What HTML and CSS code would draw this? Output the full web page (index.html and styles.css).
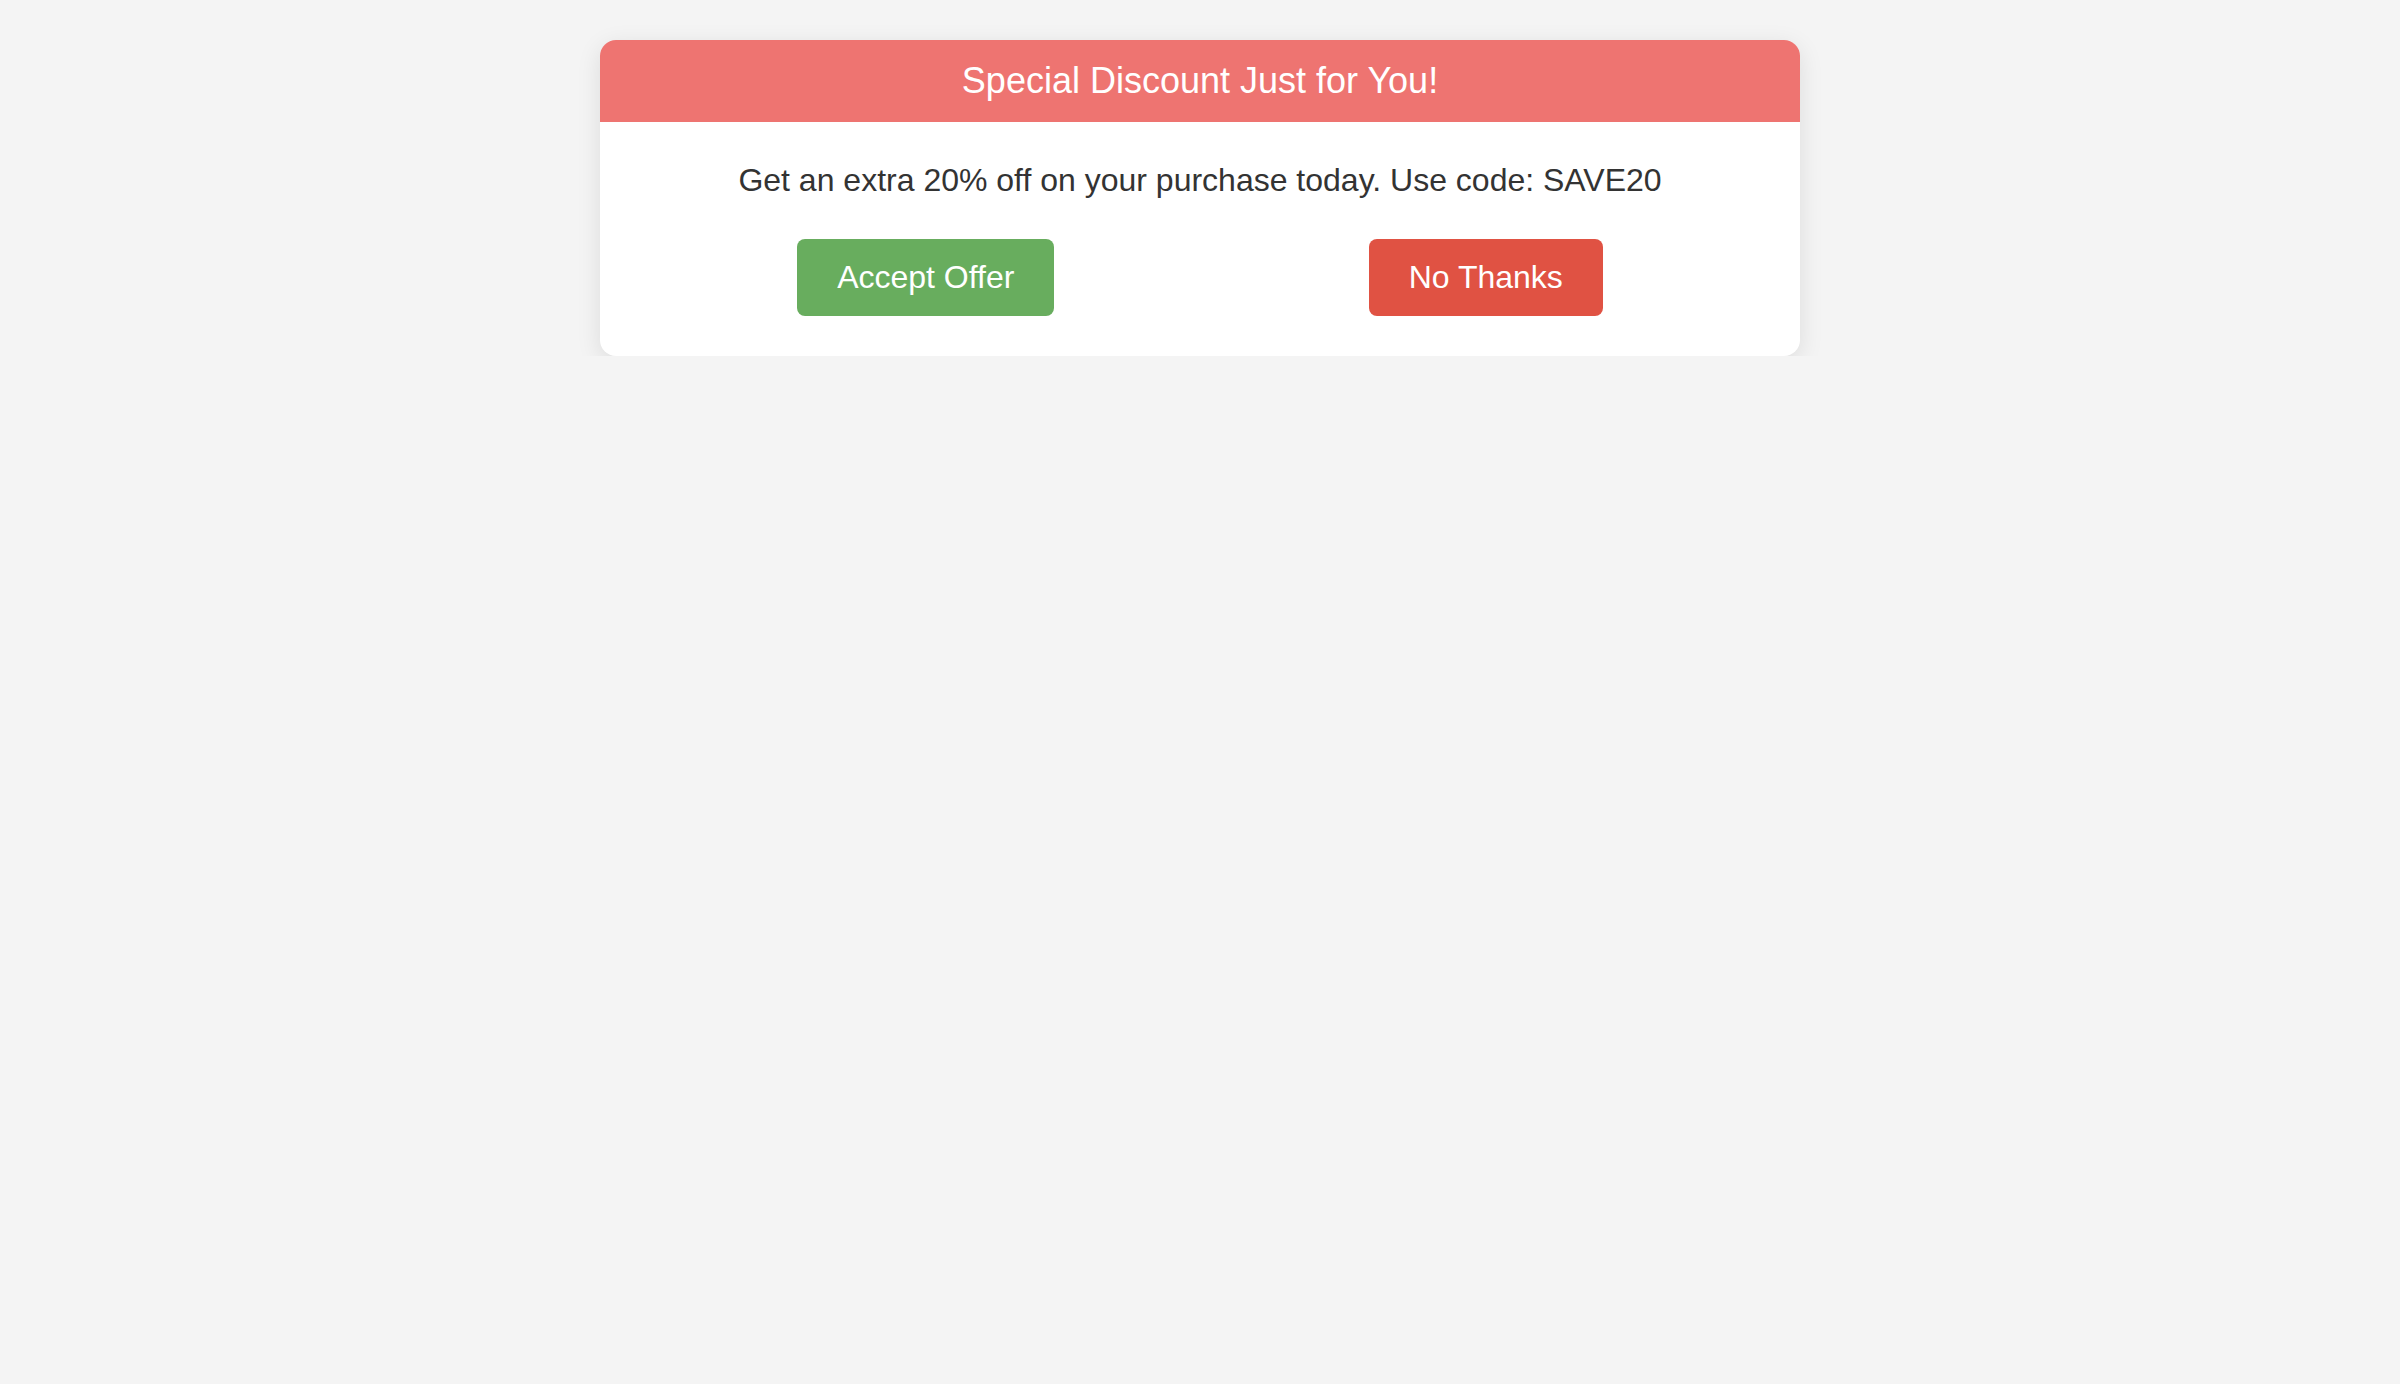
FILE: index.html
```html
<!DOCTYPE html>
<html lang="en">
<head>
<meta charset="utf-8">
<title>Special Discount</title>
<link rel="stylesheet" href="styles.css">
</head>
<body>
<div class="card">
  <div class="card-header">Special Discount Just for You!</div>
  <div class="card-body">
    <p class="offer-text">Get an extra 20% off on your purchase today. Use code: SAVE20</p>
    <div class="actions">
      <button class="btn btn-accept">Accept Offer</button>
      <button class="btn btn-decline">No Thanks</button>
    </div>
  </div>
</div>
</body>
</html>
```
FILE: styles.css
```css
html, body {
  margin: 0;
  padding: 0;
}
body {
  background: #f4f4f4;
  font-family: "Liberation Sans", Arial, sans-serif;
  padding-top: 40px;
}
.card {
  width: 1200px;
  margin: 0 auto;
  background: #ffffff;
  border-radius: 16px;
  overflow: hidden;
  box-shadow: 0 6px 24px rgba(0, 0, 0, 0.1);
}
.card-header {
  background: #ee7471;
  color: #ffffff;
  font-size: 36px;
  line-height: 42px;
  padding: 20px;
  text-align: center;
}
.card-body {
  padding: 40px;
  display: flex;
  flex-direction: column;
  gap: 40px;
}
.offer-text {
  margin: 0;
  font-size: 32px;
  line-height: 37px;
  color: #333333;
  text-align: center;
}
.actions {
  display: flex;
  justify-content: space-around;
}
.btn {
  font-family: "Liberation Sans", Arial, sans-serif;
  font-size: 32px;
  line-height: 37px;
  padding: 20px 40px;
  border: none;
  border-radius: 8px;
  color: #ffffff;
  cursor: pointer;
}
.btn-accept {
  background: #68ad5e;
}
.btn-decline {
  background: #e05243;
}
```
